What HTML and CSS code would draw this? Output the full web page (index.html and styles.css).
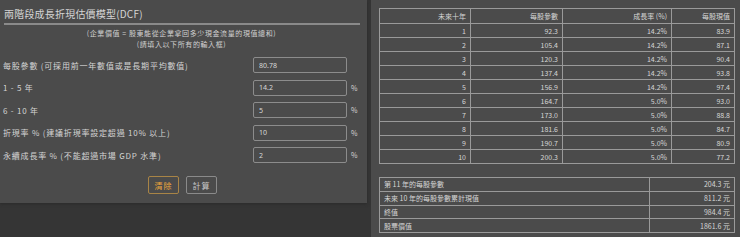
FILE: index.html
```html
<!DOCTYPE html>
<html>
<head>
	<title>兩階段成長折現估價模型</title>
	<meta charset="utf-8">
	<link rel="stylesheet" href="styles.css">
</head>
<body>
	<div class="page">
		<div class="leftSide">
			<div class="panel">
				<div class="title">兩階段成長折現估價模型(DCF)</div>
				<div class="line"></div>
				<div class="intro">
					<div>(企業價值 = 股東能從企業拿回多少現金流量的現值總和)</div>
					<div>(請填入以下所有的輸入框)</div>
				</div>
				<div class="form">
					<div class="row">
						<span class="label">每股參數 (可採用前一年數值或是長期平均數值)</span>
						<input class="box" value="80.78">
						<span class="unit"></span>
					</div>
					<div class="row">
						<span class="label">1 - 5 年</span>
						<input class="box" value="14.2">
						<span class="unit">%</span>
					</div>
					<div class="row">
						<span class="label">6 - 10 年</span>
						<input class="box" value="5">
						<span class="unit">%</span>
					</div>
					<div class="row">
						<span class="label">折現率 % (建議折現率設定超過 10% 以上)</span>
						<input class="box" value="10">
						<span class="unit">%</span>
					</div>
					<div class="row">
						<span class="label">永續成長率 % (不能超過市場 GDP 水準)</span>
						<input class="box" value="2">
						<span class="unit">%</span>
					</div>
				</div>
				<div class="btnArea">
					<button class="btn clear">清除</button>
					<button class="btn calc">計算</button>
				</div>
			</div>
		</div>
		<div class="rightSide">
			<table class="years">
				<tr><th class="c1">未來十年</th><th class="c2">每股參數</th><th class="c3">成長率 (%)</th><th class="c4">每股現值</th></tr>
				<tr><td>1</td><td>92.3</td><td>14.2%</td><td>83.9</td></tr>
				<tr><td>2</td><td>105.4</td><td>14.2%</td><td>87.1</td></tr>
				<tr><td>3</td><td>120.3</td><td>14.2%</td><td>90.4</td></tr>
				<tr><td>4</td><td>137.4</td><td>14.2%</td><td>93.8</td></tr>
				<tr><td>5</td><td>156.9</td><td>14.2%</td><td>97.4</td></tr>
				<tr><td>6</td><td>164.7</td><td>5.0%</td><td>93.0</td></tr>
				<tr><td>7</td><td>173.0</td><td>5.0%</td><td>88.8</td></tr>
				<tr><td>8</td><td>181.6</td><td>5.0%</td><td>84.7</td></tr>
				<tr><td>9</td><td>190.7</td><td>5.0%</td><td>80.9</td></tr>
				<tr><td>10</td><td>200.3</td><td>5.0%</td><td>77.2</td></tr>
			</table>
			<table class="sum">
				<tr><td class="name">第 11 年的每股參數</td><td>204.3 元</td></tr>
				<tr><td class="name">未來 10 年的每股參數累計現值</td><td>811.2 元</td></tr>
				<tr><td class="name">終值</td><td>984.4 元</td></tr>
				<tr><td class="name">股票價值</td><td>1861.6 元</td></tr>
			</table>
		</div>
	</div>
</body>
</html>
```

FILE: styles.css
```css
body {
	margin: 0;
	background-color: #353535;
	font-family: "Noto Sans CJK TC", "Noto Sans", sans-serif;
	color: #d4d4d4;
}
.page {
	display: flex;
	height: 237px;
	overflow: hidden;
}
.leftSide {
	width: 367px;
}
.panel {
	background-color: #4b4b4b;
	height: 203px;
	box-sizing: border-box;
	padding: 7px 7px 0 3px;
	box-shadow: 0 1px 3px #2a2a2a;
}
.title {
	font-size: 10px;
	line-height: 14px;
	padding-left: 1px;
	letter-spacing: 0.2px;
}
.line {
	height: 2px;
	background-color: #8a8a8a;
	margin: 2px 0 0 1px;
}
.intro {
	text-align: center;
	font-size: 7px;
	margin-top: 3px;
	letter-spacing: 0.6px;
	color: #d0d0d0;
}
.intro div {
	height: 10.5px;
	line-height: 10.5px;
}
.form {
	display: flex;
	flex-direction: column;
	gap: 6.5px;
	margin-top: 8px;
}
.row {
	display: flex;
	align-items: center;
	height: 16px;
}
.label {
	flex: 1;
	font-size: 8px;
	letter-spacing: 0.8px;
}
.box {
	width: 94px;
	height: 16px;
	box-sizing: border-box;
	border: 1px solid #8c8c8c;
	border-radius: 2px;
	background-color: #4b4b4b;
	color: #d8d8d8;
	font-family: "Noto Sans", sans-serif;
	font-size: 7px;
	padding: 0 5px;
	outline: none;
}
.unit {
	width: 9px;
	margin-left: 4px;
	font-size: 7px;
}
.btnArea {
	display: flex;
	justify-content: center;
	gap: 7px;
	margin-top: 13px;
	padding-left: 2px;
}
.btn {
	width: 31px;
	height: 18px;
	border-radius: 2px;
	background-color: #4b4b4b;
	font-family: "Noto Sans CJK TC", sans-serif;
	font-size: 8px;
	padding: 0;
	letter-spacing: 1px;
}
.clear {
	border: 1px solid #a88446;
	color: #eba53c;
}
.calc {
	border: 1px solid #8a8a8a;
	color: #c8c8c8;
}
.rightSide {
	flex: 1;
	margin-left: 4px;
	background-color: #4b4b4b;
	padding: 8px 5px 0 8px;
}
table {
	border-collapse: collapse;
	width: 356px;
	font-size: 7px;
	color: #d6d6d6;
}
th, td {
	border: 1px solid #9a9a9a;
	text-align: right;
	padding: 0 4px 0 2px;
	height: 13px;
	line-height: 12px;
}
th {
	font-weight: normal;
	height: 14px;
}
.c1 { width: 84px; }
.c2 { width: 85px; }
.c3 { width: 102px; }
.years td {
	height: 13px;
}
.sum {
	margin-top: 13px;
}
.sum td {
	height: 12.8px;
}
.sum .name {
	text-align: left;
	width: 261px;
	padding-left: 4px;
}
```
